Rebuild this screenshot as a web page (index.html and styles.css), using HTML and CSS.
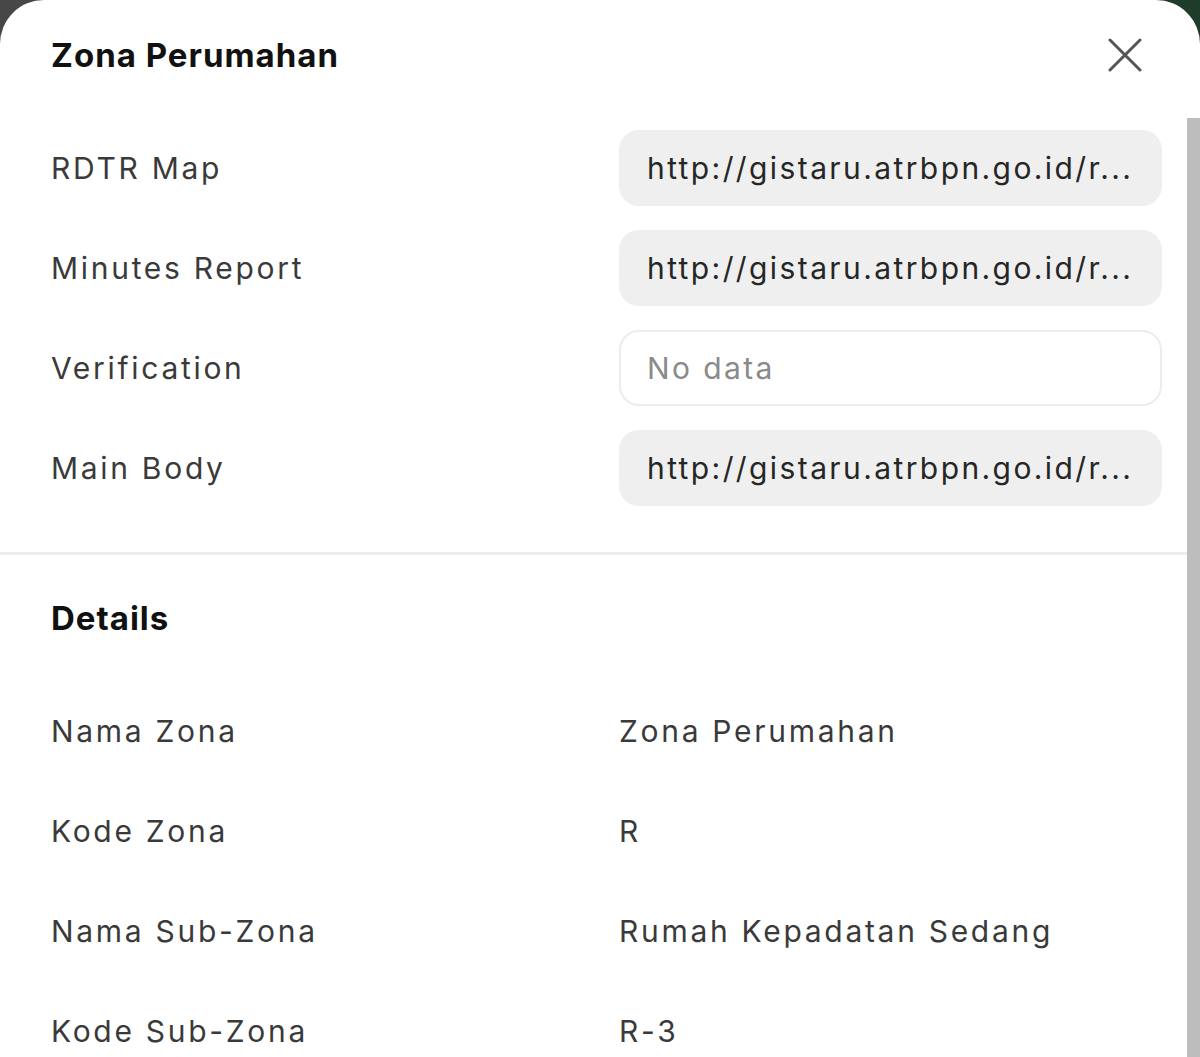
FILE: index.html
```html
<!DOCTYPE html>
<html lang="en">
<head>
    <meta charset="UTF-8">
    <meta name="viewport" content="width=device-width, initial-scale=1.0">
    <title>Zona Perumahan</title>
    <link rel="stylesheet" href="styles.css">
</head>
<body>
    <div class="sheet">
        <div class="sheet-header">
            <h1>Zona Perumahan</h1>
            <button class="close-btn" aria-label="Close">
                <svg width="34" height="34" viewBox="0 0 34 34">
                    <path d="M2 2 L32 32 M32 2 L2 32" stroke="#555" stroke-width="3" stroke-linecap="round" fill="none"/>
                </svg>
            </button>
        </div>

        <div class="doc-list">
            <div class="doc-row">
                <div class="label">RDTR Map</div>
                <div class="field">http://gistaru.atrbpn.go.id/r...</div>
            </div>
            <div class="doc-row">
                <div class="label">Minutes Report</div>
                <div class="field">http://gistaru.atrbpn.go.id/r...</div>
            </div>
            <div class="doc-row">
                <div class="label">Verification</div>
                <div class="field empty">No data</div>
            </div>
            <div class="doc-row">
                <div class="label">Main Body</div>
                <div class="field">http://gistaru.atrbpn.go.id/r...</div>
            </div>
        </div>

        <div class="details">
            <h2>Details</h2>
            <div class="detail-row">
                <div class="label">Nama Zona</div>
                <div class="value">Zona Perumahan</div>
            </div>
            <div class="detail-row">
                <div class="label">Kode Zona</div>
                <div class="value">R</div>
            </div>
            <div class="detail-row">
                <div class="label">Nama Sub-Zona</div>
                <div class="value">Rumah Kepadatan Sedang</div>
            </div>
            <div class="detail-row">
                <div class="label">Kode Sub-Zona</div>
                <div class="value">R-3</div>
            </div>
        </div>

        <div class="scrollbar"></div>
    </div>
</body>
</html>
```

FILE: styles.css
```css
html, body {
    margin: 0;
    height: 100%;
}

body {
    font-family: 'Inter', 'Noto Sans', sans-serif;
    background: linear-gradient(90deg, #474747 0%, #474747 50%, #1f3b2a 50%, #1f3b2a 100%);
    overflow: hidden;
}

.sheet {
    position: relative;
    background-color: #fff;
    border-radius: 44px 44px 0 0;
    min-height: 100%;
}

.sheet-header {
    height: 110px;
    display: flex;
    align-items: center;
    justify-content: space-between;
    padding: 0 58px 0 51px;
}

h1 {
    margin: 0;
    font-size: 33px;
    font-weight: 700;
    letter-spacing: 1px;
    color: #111;
}

.close-btn {
    background: none;
    border: none;
    padding: 0;
    width: 34px;
    height: 34px;
    cursor: pointer;
}

.doc-list {
    display: flex;
    flex-direction: column;
    gap: 24px;
    padding: 20px 38px 46px 51px;
    border-bottom: 3px solid #ebeded;
}

.doc-row,
.detail-row {
    display: grid;
    grid-template-columns: 568px 1fr;
    align-items: center;
}

.label,
.value {
    font-size: 30px;
    letter-spacing: 2.7px;
    color: #3a3a3a;
}

.field {
    height: 76px;
    box-sizing: border-box;
    padding: 0 18px 0 26px;
    background-color: #efefef;
    border: 2px solid #efefef;
    border-radius: 20px;
    font-size: 30px;
    letter-spacing: 2.4px;
    color: #262626;
    line-height: 72px;
    white-space: nowrap;
}

.field.empty {
    background-color: #fff;
    border-color: #ececec;
    color: #8a8a8a;
}

.details {
    padding: 43px 38px 0 51px;
}

h2 {
    margin: 0 0 43px;
    font-size: 33px;
    font-weight: 700;
    letter-spacing: 1px;
    color: #111;
}

.detail-row {
    height: 100px;
}

.scrollbar {
    position: absolute;
    top: 118px;
    right: 0;
    bottom: 0;
    width: 13px;
    background-color: #bdbdbd;
}
```
